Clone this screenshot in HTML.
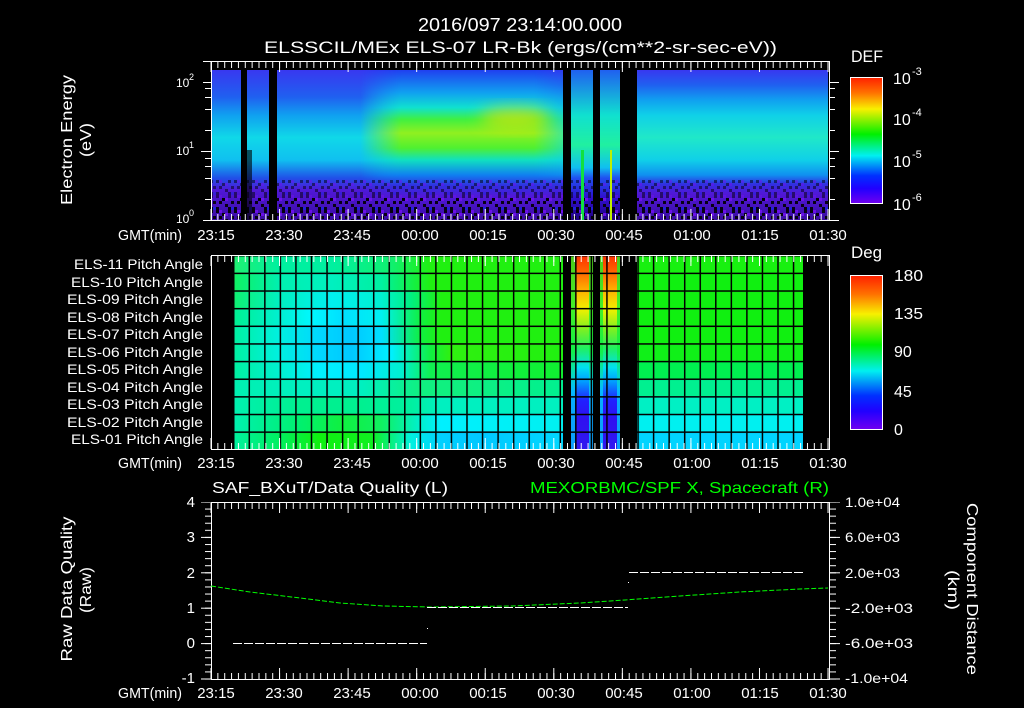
<!DOCTYPE html>
<html><head><meta charset="utf-8"><style>
html,body{margin:0;padding:0;background:#000;}
svg{display:block;}
text{font-family:"Liberation Sans",sans-serif;fill:#fff;}
</style></head><body>
<svg width="1024" height="708" viewBox="0 0 1024 708" xmlns="http://www.w3.org/2000/svg">
<defs>
<linearGradient id="cb" x1="0" y1="0" x2="0" y2="1">
<stop offset="0" stop-color="#ff2000"/><stop offset="0.12" stop-color="#ff7000"/><stop offset="0.25" stop-color="#f8f000"/><stop offset="0.45" stop-color="#00f000"/><stop offset="0.62" stop-color="#00f0f0"/><stop offset="0.78" stop-color="#0030ff"/><stop offset="0.88" stop-color="#2000ff"/><stop offset="1" stop-color="#7000f0"/>
</linearGradient>
<linearGradient id="gb" x1="0" y1="0" x2="0" y2="1">
<stop offset="0" stop-color="#3838f0"/><stop offset="0.1" stop-color="#2060f0"/><stop offset="0.2" stop-color="#10a0f0"/><stop offset="0.3" stop-color="#10d0e8"/><stop offset="0.45" stop-color="#20e8c8"/><stop offset="0.6" stop-color="#10d0e8"/><stop offset="0.7" stop-color="#1090f0"/><stop offset="0.76" stop-color="#3030e0"/><stop offset="0.82" stop-color="#5018d8"/><stop offset="1" stop-color="#3a0ca0"/>
</linearGradient>
<linearGradient id="gl" x1="0" y1="0" x2="0" y2="1">
<stop offset="0" stop-color="#3838f0"/><stop offset="0.18" stop-color="#2060f0"/><stop offset="0.3" stop-color="#10a0f0"/><stop offset="0.45" stop-color="#10d8e8"/><stop offset="0.6" stop-color="#10c0f0"/><stop offset="0.72" stop-color="#2050e8"/><stop offset="0.8" stop-color="#5018d8"/><stop offset="1" stop-color="#3a0ca0"/>
</linearGradient>
<linearGradient id="gm" x1="0" y1="0" x2="0" y2="1">
<stop offset="0" stop-color="#2040f0"/><stop offset="0.15" stop-color="#10a0f0"/><stop offset="0.25" stop-color="#10e0d0"/><stop offset="0.33" stop-color="#40f040"/><stop offset="0.42" stop-color="#90f020"/><stop offset="0.52" stop-color="#50f030"/><stop offset="0.6" stop-color="#10e0c0"/><stop offset="0.7" stop-color="#1080f0"/><stop offset="0.77" stop-color="#3030e0"/><stop offset="0.84" stop-color="#5018d8"/><stop offset="1" stop-color="#3a0ca0"/>
</linearGradient>
<linearGradient id="gs" x1="0" y1="0" x2="0" y2="1">
<stop offset="0" stop-color="#2060f0"/><stop offset="0.3" stop-color="#10e0d0"/><stop offset="0.5" stop-color="#20f0a0"/><stop offset="0.65" stop-color="#10c0f0"/><stop offset="0.72" stop-color="#2050f0"/><stop offset="0.85" stop-color="#3010d0"/><stop offset="1" stop-color="#200080"/>
</linearGradient>
<linearGradient id="fadeX" x1="0" y1="0" x2="1" y2="0">
<stop offset="0" stop-color="#fff" stop-opacity="0"/><stop offset="0.2" stop-color="#fff" stop-opacity="1"/><stop offset="0.85" stop-color="#fff" stop-opacity="1"/><stop offset="1" stop-color="#fff" stop-opacity="0.3"/>
</linearGradient>
<linearGradient id="fadeL" x1="0" y1="0" x2="1" y2="0">
<stop offset="0" stop-color="#fff" stop-opacity="1"/><stop offset="0.75" stop-color="#fff" stop-opacity="1"/><stop offset="1" stop-color="#fff" stop-opacity="0"/>
</linearGradient>
<mask id="mX" maskUnits="userSpaceOnUse" x="360" y="70" width="205" height="150"><rect x="360" y="70" width="205" height="150" fill="url(#fadeX)"/></mask>
<mask id="mL" maskUnits="userSpaceOnUse" x="211" y="70" width="200" height="150"><rect x="211" y="70" width="200" height="150" fill="url(#fadeL)"/></mask>
<filter id="bl" x="-50%" y="-50%" width="200%" height="200%"><feGaussianBlur stdDeviation="8"/></filter>
<pattern id="nz" width="18" height="15" patternUnits="userSpaceOnUse">
<rect x="0" y="0" width="3" height="3" fill="#000"/><rect x="6" y="3" width="3" height="3" fill="#000"/><rect x="12" y="0" width="3" height="3" fill="#000"/><rect x="3" y="6" width="3" height="3" fill="#000"/><rect x="9" y="9" width="3" height="3" fill="#000"/><rect x="15" y="6" width="3" height="3" fill="#000"/><rect x="0" y="12" width="3" height="3" fill="#000"/><rect x="12" y="12" width="3" height="3" fill="#000"/><rect x="3" y="0" width="3" height="3" fill="#7010f0"/><rect x="9" y="3" width="3" height="3" fill="#7010f0"/><rect x="15" y="12" width="3" height="3" fill="#2020e0"/>
</pattern>
<linearGradient id="st" x1="0" y1="0" x2="0" y2="1">
<stop offset="0" stop-color="#ff3000"/><stop offset="0.08" stop-color="#ff6000"/><stop offset="0.18" stop-color="#ffb000"/><stop offset="0.28" stop-color="#f0f000"/><stop offset="0.38" stop-color="#80f020"/><stop offset="0.48" stop-color="#20f060"/><stop offset="0.58" stop-color="#00e0f0"/><stop offset="0.65" stop-color="#00a0ff"/><stop offset="0.75" stop-color="#2020ff"/><stop offset="0.85" stop-color="#3010f0"/><stop offset="1" stop-color="#3018f0"/>
</linearGradient>
<linearGradient id="se" x1="0" y1="0" x2="0" y2="1">
<stop offset="0" stop-color="#20f020"/><stop offset="0.5" stop-color="#10f040"/><stop offset="0.7" stop-color="#00d0ff"/><stop offset="1" stop-color="#00c0ff"/>
</linearGradient>
<linearGradient id="r11" gradientUnits="userSpaceOnUse" x1="233" y1="0" x2="563" y2="0"><stop offset="0" stop-color="#20f070"/><stop offset="0.14" stop-color="#00f0a0"/><stop offset="0.3" stop-color="#00f0a0"/><stop offset="0.48" stop-color="#10f070"/><stop offset="0.6" stop-color="#20f010"/><stop offset="1" stop-color="#20f010"/></linearGradient>
<linearGradient id="r10" gradientUnits="userSpaceOnUse" x1="233" y1="0" x2="563" y2="0"><stop offset="0" stop-color="#10f060"/><stop offset="0.14" stop-color="#00f0b0"/><stop offset="0.3" stop-color="#00f0c0"/><stop offset="0.45" stop-color="#00f0a0"/><stop offset="0.6" stop-color="#20f010"/><stop offset="1" stop-color="#20f010"/></linearGradient>
<linearGradient id="r09" gradientUnits="userSpaceOnUse" x1="233" y1="0" x2="563" y2="0"><stop offset="0" stop-color="#10f070"/><stop offset="0.14" stop-color="#00f0c0"/><stop offset="0.3" stop-color="#00f0f0"/><stop offset="0.45" stop-color="#00f0d0"/><stop offset="0.54" stop-color="#00f080"/><stop offset="0.63" stop-color="#20f010"/><stop offset="1" stop-color="#20f010"/></linearGradient>
<linearGradient id="r08" gradientUnits="userSpaceOnUse" x1="233" y1="0" x2="563" y2="0"><stop offset="0" stop-color="#00f090"/><stop offset="0.14" stop-color="#00f0d0"/><stop offset="0.24" stop-color="#00f8ff"/><stop offset="0.33" stop-color="#00e0ff"/><stop offset="0.45" stop-color="#00f0f0"/><stop offset="0.57" stop-color="#10f040"/><stop offset="0.63" stop-color="#20f010"/><stop offset="1" stop-color="#20f010"/></linearGradient>
<linearGradient id="r07" gradientUnits="userSpaceOnUse" x1="233" y1="0" x2="563" y2="0"><stop offset="0" stop-color="#00f0a0"/><stop offset="0.14" stop-color="#00f0e0"/><stop offset="0.26" stop-color="#00d8ff"/><stop offset="0.36" stop-color="#00c8ff"/><stop offset="0.45" stop-color="#00e0ff"/><stop offset="0.57" stop-color="#10f040"/><stop offset="0.63" stop-color="#20f010"/><stop offset="1" stop-color="#20f010"/></linearGradient>
<linearGradient id="r06" gradientUnits="userSpaceOnUse" x1="233" y1="0" x2="563" y2="0"><stop offset="0" stop-color="#00f0a0"/><stop offset="0.14" stop-color="#00f0e0"/><stop offset="0.26" stop-color="#00d8ff"/><stop offset="0.36" stop-color="#00c8ff"/><stop offset="0.48" stop-color="#00f0ff"/><stop offset="0.6" stop-color="#10f040"/><stop offset="0.66" stop-color="#30f010"/><stop offset="1" stop-color="#20f010"/></linearGradient>
<linearGradient id="r05" gradientUnits="userSpaceOnUse" x1="233" y1="0" x2="563" y2="0"><stop offset="0" stop-color="#00f0a0"/><stop offset="0.14" stop-color="#00f0d0"/><stop offset="0.26" stop-color="#00f0ff"/><stop offset="0.39" stop-color="#00e8ff"/><stop offset="0.51" stop-color="#00f0d0"/><stop offset="0.6" stop-color="#10f050"/><stop offset="1" stop-color="#10f030"/></linearGradient>
<linearGradient id="r04" gradientUnits="userSpaceOnUse" x1="233" y1="0" x2="563" y2="0"><stop offset="0" stop-color="#00f0b0"/><stop offset="0.2" stop-color="#00f0c0"/><stop offset="0.39" stop-color="#00f0c0"/><stop offset="0.57" stop-color="#10f080"/><stop offset="0.7" stop-color="#10f080"/><stop offset="1" stop-color="#00f090"/></linearGradient>
<linearGradient id="r03" gradientUnits="userSpaceOnUse" x1="233" y1="0" x2="563" y2="0"><stop offset="0" stop-color="#00f0b0"/><stop offset="0.2" stop-color="#00f090"/><stop offset="0.39" stop-color="#00f090"/><stop offset="0.54" stop-color="#00f0a0"/><stop offset="0.63" stop-color="#00f0c0"/><stop offset="1" stop-color="#00f0c0"/></linearGradient>
<linearGradient id="r02" gradientUnits="userSpaceOnUse" x1="233" y1="0" x2="563" y2="0"><stop offset="0" stop-color="#00f0b0"/><stop offset="0.2" stop-color="#00f070"/><stop offset="0.33" stop-color="#10f040"/><stop offset="0.45" stop-color="#10f060"/><stop offset="0.57" stop-color="#00f0d0"/><stop offset="0.63" stop-color="#00f0ff"/><stop offset="1" stop-color="#00f0f0"/></linearGradient>
<linearGradient id="r01" gradientUnits="userSpaceOnUse" x1="233" y1="0" x2="563" y2="0"><stop offset="0" stop-color="#00f0a0"/><stop offset="0.14" stop-color="#00f060"/><stop offset="0.26" stop-color="#10f010"/><stop offset="0.42" stop-color="#10f020"/><stop offset="0.54" stop-color="#00f0e0"/><stop offset="0.63" stop-color="#00d0ff"/><stop offset="0.75" stop-color="#00c8ff"/><stop offset="1" stop-color="#00d8ff"/></linearGradient>
<pattern id="grid" x="233" y="255" width="15.55" height="17.64" patternUnits="userSpaceOnUse"><rect x="0" y="0" width="1.5" height="17.64" fill="#000"/><rect x="0" y="0" width="15.55" height="1.5" fill="#000"/></pattern>
<pattern id="tmin" x="210.5" y="0" width="6.856" height="708" patternUnits="userSpaceOnUse"><rect x="0" y="0" width="1" height="708" fill="#fff"/></pattern>
<pattern id="tmaj" x="210.5" y="0" width="68.56" height="708" patternUnits="userSpaceOnUse"><rect x="0" y="0" width="1" height="708" fill="#fff"/></pattern>
<pattern id="vmin" x="0" y="501.5" width="1024" height="7.08" patternUnits="userSpaceOnUse"><rect x="0" y="0" width="1024" height="1" fill="#fff"/></pattern>
<pattern id="vmaj" x="0" y="501.5" width="1024" height="35.4" patternUnits="userSpaceOnUse"><rect x="0" y="0" width="1024" height="1" fill="#fff"/></pattern>
</defs>

<text x="418" y="31" font-size="18" textLength="204" lengthAdjust="spacingAndGlyphs">2016/097 23:14:00.000</text>
<text x="264" y="53" font-size="17" textLength="513" lengthAdjust="spacingAndGlyphs">ELSSCIL/MEx ELS-07 LR-Bk  (ergs/(cm**2-sr-sec-eV))</text>

<rect x="211" y="70" width="617" height="150" fill="url(#gb)"/>
<rect x="211" y="70" width="200" height="150" fill="url(#gl)" mask="url(#mL)"/>
<rect x="360" y="70" width="205" height="150" fill="url(#gm)" mask="url(#mX)"/>
<ellipse cx="515" cy="118" rx="35" ry="10" fill="#f0e000" opacity="0.7" filter="url(#bl)"/>
<rect x="571" y="70" width="22" height="150" fill="url(#gs)"/>
<rect x="600" y="70" width="20" height="150" fill="url(#gs)"/>
<rect x="211" y="180" width="617" height="20" fill="url(#nz)" opacity="0.5"/>
<rect x="211" y="198" width="617" height="22" fill="url(#nz)" opacity="0.9"/>
<rect x="581" y="150" width="3" height="70" fill="#10e040"/>
<rect x="610" y="150" width="2" height="70" fill="#c0f000"/>
<rect x="241" y="70" width="6" height="150" fill="#000"/>
<rect x="247" y="150" width="5" height="70" fill="#000" opacity="0.6"/>
<rect x="269" y="70" width="8" height="150" fill="#000"/>
<rect x="563" y="70" width="8" height="150" fill="#000"/>
<rect x="593" y="70" width="7" height="150" fill="#000"/>
<rect x="620" y="70" width="17" height="150" fill="#000"/>
<line x1="203" y1="61.5" x2="829" y2="61.5" stroke="#fff"/>
<line x1="203" y1="220.5" x2="839" y2="220.5" stroke="#fff"/>
<line x1="829.5" y1="61" x2="829.5" y2="221" stroke="#fff"/>
<line x1="211.5" y1="61" x2="211.5" y2="221" stroke="#fff"/>
<rect x="210" y="62" width="620" height="6" fill="url(#tmin)"/>
<rect x="210" y="62" width="620" height="10" fill="url(#tmaj)"/>
<rect x="210" y="214" width="620" height="6" fill="url(#tmin)"/>
<rect x="210" y="209" width="620" height="11" fill="url(#tmaj)"/>
<g stroke="#fff">
<path d="M203 82.5H211M205 88.5H211M205 97.5H211M205 109.5H211M205 130.5H211M201 151.5H211M205 158.5H211M205 166.5H211M205 178.5H211M205 199.5H211"/>
<path d="M829 82.5H839M829 88.5H835M829 97.5H835M829 109.5H835M829 130.5H835M829 151.5H839M829 158.5H835M829 166.5H835M829 178.5H835M829 199.5H835"/>
</g>
<text x="176" y="87" font-size="12">10</text><text x="189" y="80" font-size="9">2</text>
<text x="176" y="155" font-size="12">10</text><text x="189" y="148" font-size="9">1</text>
<text x="176" y="223" font-size="12">10</text><text x="189" y="216" font-size="9">0</text>
<text transform="translate(72,140) rotate(-90)" text-anchor="middle" font-size="16" textLength="130" lengthAdjust="spacingAndGlyphs">Electron Energy</text>
<text transform="translate(91,140) rotate(-90)" text-anchor="middle" font-size="16" textLength="34" lengthAdjust="spacingAndGlyphs">(eV)</text>
<text x="851" y="62" font-size="17" textLength="32" lengthAdjust="spacingAndGlyphs">DEF</text>
<rect x="850.5" y="77.5" width="32" height="126" fill="url(#cb)" stroke="#fff"/>
<g font-size="16">
<text x="893" y="84">10</text><text x="912" y="75" font-size="11">-3</text>
<text x="893" y="125">10</text><text x="912" y="116" font-size="11">-4</text>
<text x="893" y="167">10</text><text x="912" y="158" font-size="11">-5</text>
<text x="893" y="210">10</text><text x="912" y="201" font-size="11">-6</text>
</g>
<g font-size="15" text-anchor="middle">
<text x="150" y="240" textLength="64" lengthAdjust="spacingAndGlyphs">GMT(min)</text>
<text x="216" y="240">23:15</text><text x="284" y="240">23:30</text><text x="352" y="240">23:45</text><text x="420" y="240">00:00</text><text x="488" y="240">00:15</text><text x="556" y="240">00:30</text><text x="624" y="240">00:45</text><text x="692" y="240">01:00</text><text x="760" y="240">01:15</text><text x="828" y="240">01:30</text>
</g>

<rect x="233" y="255" width="330" height="18" fill="url(#r11)"/>
<rect x="233" y="272.6" width="330" height="18" fill="url(#r10)"/>
<rect x="233" y="290.3" width="330" height="18" fill="url(#r09)"/>
<rect x="233" y="307.9" width="330" height="18" fill="url(#r08)"/>
<rect x="233" y="325.6" width="330" height="18" fill="url(#r07)"/>
<rect x="233" y="343.2" width="330" height="18" fill="url(#r06)"/>
<rect x="233" y="360.8" width="330" height="18" fill="url(#r05)"/>
<rect x="233" y="378.5" width="330" height="18" fill="url(#r04)"/>
<rect x="233" y="396.1" width="330" height="18" fill="url(#r03)"/>
<rect x="233" y="413.8" width="330" height="18" fill="url(#r02)"/>
<rect x="233" y="431.4" width="330" height="18" fill="url(#r01)"/>
<g>
<rect x="637" y="255" width="166" height="18" fill="#18f010"/>
<rect x="637" y="272.6" width="166" height="18" fill="#10f010"/>
<rect x="637" y="290.3" width="166" height="18" fill="#10f010"/>
<rect x="637" y="307.9" width="166" height="18" fill="#10f010"/>
<rect x="637" y="325.6" width="166" height="18" fill="#10f010"/>
<rect x="637" y="343.2" width="166" height="18" fill="#10f018"/>
<rect x="637" y="360.8" width="166" height="18" fill="#00f050"/>
<rect x="637" y="378.5" width="166" height="18" fill="#00f090"/>
<rect x="637" y="396.1" width="166" height="18" fill="#00f0c4"/>
<rect x="637" y="413.8" width="166" height="18" fill="#00f0f0"/>
<rect x="637" y="431.4" width="166" height="18" fill="#00d4ff"/>
</g>
<rect x="571" y="255" width="22" height="194" fill="url(#st)"/>
<rect x="600" y="255" width="20" height="194" fill="url(#st)"/>
<rect x="571" y="255" width="4" height="194" fill="url(#se)" opacity="0.8"/>
<rect x="589" y="255" width="4" height="194" fill="url(#se)" opacity="0.8"/>
<rect x="600" y="255" width="3" height="194" fill="url(#se)" opacity="0.8"/>
<rect x="617" y="255" width="3" height="194" fill="url(#se)" opacity="0.8"/>
<rect x="233" y="255" width="571" height="194" fill="url(#grid)"/>
<rect x="563" y="255" width="8" height="194" fill="#000"/>
<rect x="593" y="255" width="7" height="194" fill="#000"/>
<rect x="620" y="255" width="17" height="194" fill="#000"/>
<rect x="211.5" y="255.5" width="618" height="194" fill="none" stroke="#fff"/>
<rect x="210" y="256" width="620" height="6" fill="url(#tmin)"/>
<rect x="210" y="256" width="620" height="10" fill="url(#tmaj)"/>
<rect x="210" y="443" width="620" height="6" fill="url(#tmin)"/>
<rect x="210" y="438" width="620" height="11" fill="url(#tmaj)"/>
<g font-size="14" text-anchor="end">
<text x="203" y="269" textLength="129" lengthAdjust="spacingAndGlyphs">ELS-11 Pitch Angle</text>
<text x="203" y="287" textLength="132" lengthAdjust="spacingAndGlyphs">ELS-10 Pitch Angle</text>
<text x="203" y="304" textLength="136" lengthAdjust="spacingAndGlyphs">ELS-09 Pitch Angle</text>
<text x="203" y="322" textLength="136" lengthAdjust="spacingAndGlyphs">ELS-08 Pitch Angle</text>
<text x="203" y="339" textLength="136" lengthAdjust="spacingAndGlyphs">ELS-07 Pitch Angle</text>
<text x="203" y="357" textLength="136" lengthAdjust="spacingAndGlyphs">ELS-06 Pitch Angle</text>
<text x="203" y="374" textLength="136" lengthAdjust="spacingAndGlyphs">ELS-05 Pitch Angle</text>
<text x="203" y="392" textLength="136" lengthAdjust="spacingAndGlyphs">ELS-04 Pitch Angle</text>
<text x="203" y="409" textLength="136" lengthAdjust="spacingAndGlyphs">ELS-03 Pitch Angle</text>
<text x="203" y="427" textLength="136" lengthAdjust="spacingAndGlyphs">ELS-02 Pitch Angle</text>
<text x="203" y="444" textLength="132" lengthAdjust="spacingAndGlyphs">ELS-01 Pitch Angle</text>
</g>
<text x="851" y="258" font-size="17" textLength="31" lengthAdjust="spacingAndGlyphs">Deg</text>
<rect x="850.5" y="275.5" width="32" height="154" fill="url(#cb)" stroke="#fff"/>
<g font-size="16">
<text x="894" y="281" textLength="29" lengthAdjust="spacingAndGlyphs">180</text>
<text x="894" y="319" textLength="29" lengthAdjust="spacingAndGlyphs">135</text>
<text x="894" y="357">90</text>
<text x="894" y="397">45</text>
<text x="894" y="435">0</text>
</g>
<g font-size="15" text-anchor="middle">
<text x="150" y="468" textLength="64" lengthAdjust="spacingAndGlyphs">GMT(min)</text>
<text x="216" y="468">23:15</text><text x="284" y="468">23:30</text><text x="352" y="468">23:45</text><text x="420" y="468">00:00</text><text x="488" y="468">00:15</text><text x="556" y="468">00:30</text><text x="624" y="468">00:45</text><text x="692" y="468">01:00</text><text x="760" y="468">01:15</text><text x="828" y="468">01:30</text>
</g>

<text x="212" y="493" font-size="16" textLength="236" lengthAdjust="spacingAndGlyphs">SAF_BXuT/Data Quality (L)</text>
<text x="530" y="493" font-size="16" textLength="299" lengthAdjust="spacingAndGlyphs" style="fill:#00ff00">MEXORBMC/SPF X, Spacecraft (R)</text>
<rect x="211.5" y="502.5" width="618" height="177" fill="none" stroke="#fff"/>
<rect x="210" y="503" width="620" height="6" fill="url(#tmin)"/>
<rect x="210" y="503" width="620" height="10" fill="url(#tmaj)"/>
<rect x="210" y="673" width="620" height="6" fill="url(#tmin)"/>
<rect x="210" y="668" width="620" height="11" fill="url(#tmaj)"/>
<rect x="205" y="502" width="6" height="178" fill="url(#vmin)"/>
<rect x="201" y="502" width="10" height="178" fill="url(#vmaj)"/>
<rect x="830" y="502" width="6" height="178" fill="url(#vmin)"/>
<rect x="830" y="502" width="10" height="178" fill="url(#vmaj)"/>
<path d="M211 586 L250 592 L300 598 L340 603 L383 606 L430 607 L512 606 L580 603 L625 600 L680 596 L740 592 L800 589 L828 588" fill="none" stroke="#00ff00" stroke-width="1" stroke-dasharray="5 2"/>
<g stroke="#fff" stroke-width="1" stroke-dasharray="9 2" fill="none">
<path d="M233 643.5H427"/>
<path d="M427 607.5H628"/>
<path d="M629 572.5H803"/>
</g>
<rect x="427" y="628" width="1" height="1" fill="#fff"/>
<rect x="628" y="582" width="1" height="1" fill="#fff"/>
<g font-size="15" text-anchor="end">
<text x="195" y="507">4</text><text x="195" y="542">3</text><text x="195" y="578">2</text><text x="195" y="613">1</text><text x="195" y="648">0</text><text x="195" y="683">-1</text>
</g>
<g font-size="14">
<text x="845" y="507" textLength="55" lengthAdjust="spacingAndGlyphs">1.0e+04</text>
<text x="845" y="542" textLength="55" lengthAdjust="spacingAndGlyphs">6.0e+03</text>
<text x="845" y="578" textLength="55" lengthAdjust="spacingAndGlyphs">2.0e+03</text>
<text x="845" y="613" textLength="68" lengthAdjust="spacingAndGlyphs">-2.0e+03</text>
<text x="845" y="648" textLength="68" lengthAdjust="spacingAndGlyphs">-6.0e+03</text>
<text x="845" y="683" textLength="63" lengthAdjust="spacingAndGlyphs">-1.0e+04</text>
</g>
<text transform="translate(72,589) rotate(-90)" text-anchor="middle" font-size="16" textLength="145" lengthAdjust="spacingAndGlyphs">Raw Data Quality</text>
<text transform="translate(91,590) rotate(-90)" text-anchor="middle" font-size="16" textLength="46" lengthAdjust="spacingAndGlyphs">(Raw)</text>
<text transform="translate(967,589) rotate(90)" text-anchor="middle" font-size="16" textLength="172" lengthAdjust="spacingAndGlyphs">Component Distance</text>
<text transform="translate(948,590) rotate(90)" text-anchor="middle" font-size="16" textLength="40" lengthAdjust="spacingAndGlyphs">(km)</text>
<g font-size="15" text-anchor="middle">
<text x="150" y="698" textLength="64" lengthAdjust="spacingAndGlyphs">GMT(min)</text>
<text x="216" y="698">23:15</text><text x="284" y="698">23:30</text><text x="352" y="698">23:45</text><text x="420" y="698">00:00</text><text x="488" y="698">00:15</text><text x="556" y="698">00:30</text><text x="624" y="698">00:45</text><text x="692" y="698">01:00</text><text x="760" y="698">01:15</text><text x="828" y="698">01:30</text>
</g>
</svg>
</body></html>
